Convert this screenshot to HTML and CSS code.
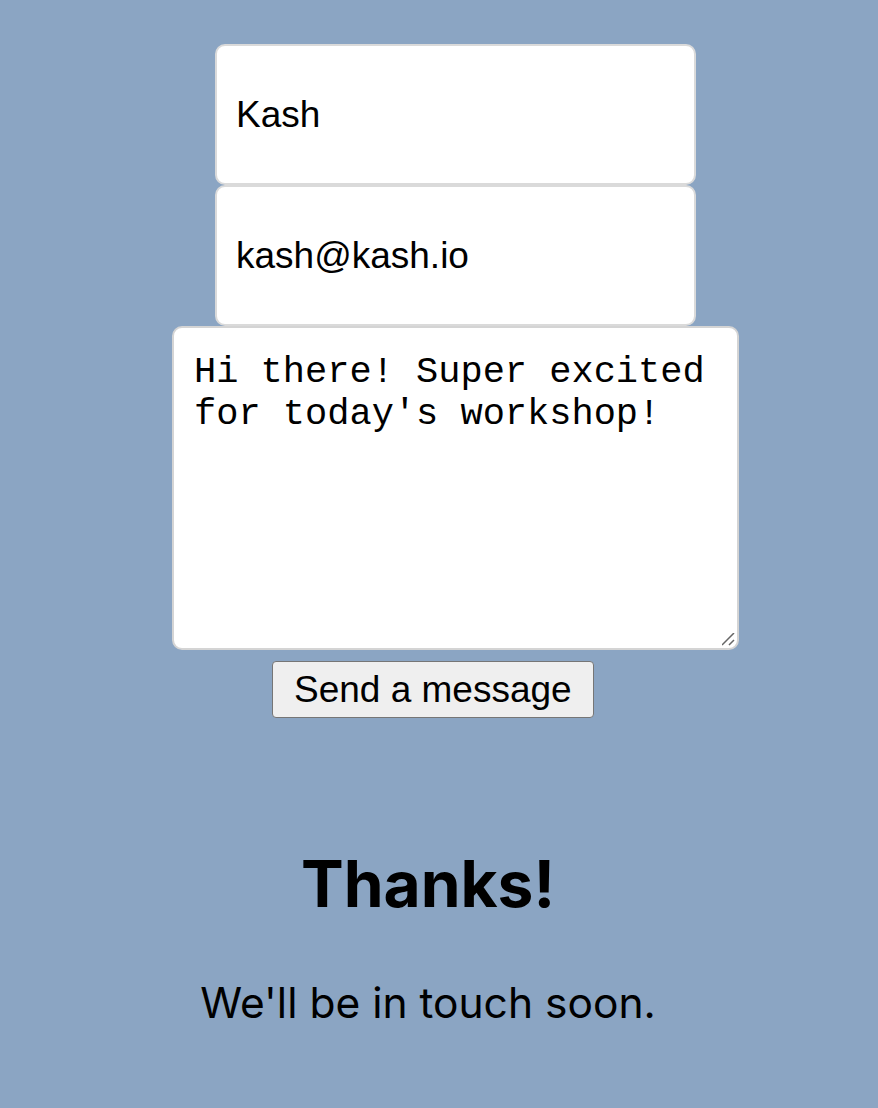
FILE: index.html
```html
<!DOCTYPE html>
<html lang="en">
<head>
<meta charset="utf-8">
<title>Contact</title>
<link rel="stylesheet" href="styles.css">
</head>
<body>
<main class="page">
  <form class="contact">
    <input class="field field-name" type="text" value="Kash">
    <input class="field field-email" type="email" value="kash@kash.io">
    <textarea class="message">Hi there! Super excited for today's workshop!</textarea>
    <button class="send" type="button">Send a message</button>
  </form>
  <section class="thanks">
    <h1 class="thanks-title">Thanks!</h1>
    <p class="thanks-text">We'll be in touch soon.</p>
  </section>
</main>
</body>
</html>
```

FILE: styles.css
```css
html, body {
  margin: 0;
  padding: 0;
  background: #8ba5c3;
}
body {
  min-height: 1108px;
  font-family: "Liberation Sans", Arial, sans-serif;
}
.page {
  padding-top: 44px;
}
.contact {
  display: flex;
  flex-direction: column;
  align-items: flex-start;
}
.field {
  box-sizing: border-box;
  width: 481px;
  height: 141px;
  margin: 0 0 0 215px;
  padding: 0 20px 0 19px;
  border: 2px solid #dadada;
  border-radius: 10px;
  background: #fff;
  font-family: "Liberation Sans", Arial, sans-serif;
  font-size: 37px;
  color: #000;
  outline: none;
}
.message {
  box-sizing: border-box;
  width: 567px;
  height: 324px;
  margin: 0 0 0 172px;
  padding: 23px 20px 19px;
  border: 2px solid #d4d4d4;
  border-radius: 10px;
  background: #fff;
  font-family: "Liberation Mono", "Courier New", monospace;
  font-size: 37px;
  line-height: 42px;
  color: #000;
  outline: none;
}
.message::-webkit-scrollbar {
  width: 16px;
  height: 16px;
  background: transparent;
}
.message::-webkit-resizer {
  background: url("data:image/svg+xml,%3Csvg xmlns='http://www.w3.org/2000/svg' width='16' height='16'%3E%3Cpath d='M2 14L14 2M9 14L14 9' stroke='%23666' stroke-width='1.5' fill='none'/%3E%3C/svg%3E") no-repeat right 1px bottom 1px;
}
.send {
  box-sizing: border-box;
  height: 57px;
  margin: 11px 0 0 272px;
  padding: 0 21px;
  border: 1px solid #767676;
  border-radius: 4px;
  background: #efefef;
  font-family: "Liberation Sans", Arial, sans-serif;
  font-size: 37px;
  color: #000;
}
.thanks {
  padding-right: 22px;
  text-align: center;
  font-family: Inter, "Noto Sans", sans-serif;
  color: #000;
}
.thanks-title {
  margin: 126px 0 0;
  font-size: 64px;
  font-weight: 700;
  line-height: 80px;
}
.thanks-text {
  margin: 54px 0 0;
  font-size: 42.5px;
  font-weight: 400;
  line-height: 50px;
}
```
